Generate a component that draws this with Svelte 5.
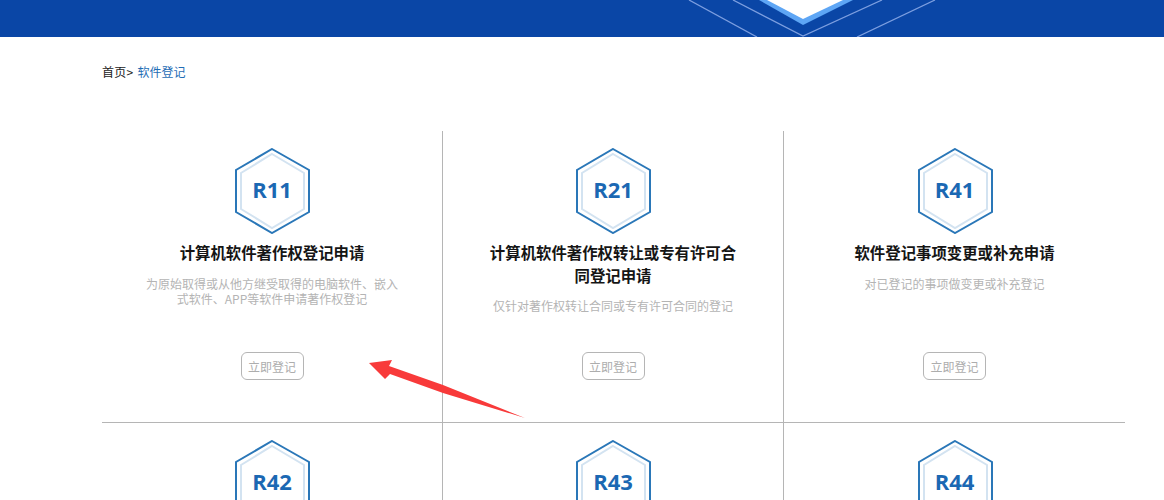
<script>
	const cards = [
		{ code: 'R11', title: '计算机软件著作权登记申请', desc: '为原始取得或从他方继受取得的电脑软件、嵌入式软件、APP等软件申请著作权登记' },
		{ code: 'R21', title: '计算机软件著作权转让或专有许可合同登记申请', desc: '仅针对著作权转让合同或专有许可合同的登记' },
		{ code: 'R41', title: '软件登记事项变更或补充申请', desc: '对已登记的事项做变更或补充登记' },
		{ code: 'R42', title: '', desc: '' },
		{ code: 'R43', title: '', desc: '' },
		{ code: 'R44', title: '', desc: '' }
	];
</script>

<div class="page">
	<header class="banner">
		<svg class="banner-art" width="1164" height="37" viewBox="0 0 1164 37">
			<polygon points="759,0 803,25 853,0" fill="#5ea6f5" />
			<polygon points="767,0 803,19 843,0" fill="#ffffff" />
			<g fill="none" stroke="#7d9fe0" stroke-width="1.3">
				<path d="M733 0 L803 36 L882 0" />
				<path d="M689 0 L757 37" />
				<path d="M935 0 L857 37" />
			</g>
		</svg>
	</header>

	<nav class="crumbs">
		<span>首页&gt;</span>
		<a href="#top">软件登记</a>
	</nav>

	<section class="grid">
		{#each cards as card}
			<article class="card">
				<div class="hex">
					<svg width="76" height="86" viewBox="0 0 76 86">
						<polygon points="38,1 75,22 75,64 38,85 2,64 2,22" fill="none" stroke="#2a77b8" stroke-width="2" />
						<polygon points="38,6 70,25 70,61 38,80 7,61 7,25" fill="none" stroke="#d3e3f1" stroke-width="2" />
					</svg>
					<span>{card.code}</span>
				</div>
				{#if card.title}
					<h3>{card.title}</h3>
					<p>{card.desc}</p>
					<button type="button">立即登记</button>
				{/if}
			</article>
		{/each}
	</section>

	<svg class="arrow" width="170" height="65" viewBox="0 0 170 65">
		<polygon points="4,8 27,5 24,11 78,30 160,63 78,38 25,19 20,24" fill="#f83a3a" />
	</svg>
</div>

<style>
	:global(body) {
		margin: 0;
		background: #fff;
	}

	.page {
		position: relative;
		height: 500px;
		overflow: hidden;
		font-family: "Noto Sans CJK SC", "Open Sans", sans-serif;
	}

	.banner {
		position: relative;
		height: 37px;
		background: #0a46a6;
	}

	.banner-art {
		position: absolute;
		left: 0;
		top: 0;
	}

	.crumbs {
		display: flex;
		gap: 4px;
		margin: 26px 0 0 102px;
		font-size: 12px;
		line-height: 18px;
		color: #222;
	}

	.crumbs span {
		letter-spacing: 0.3px;
	}

	.crumbs a {
		color: #1f6db5;
		text-decoration: none;
	}

	.grid {
		display: grid;
		grid-template-columns: repeat(3, 341px);
		grid-auto-rows: 292px;
		width: 1023px;
		margin: 50px 0 0 102px;
	}

	.card {
		display: flex;
		flex-direction: column;
		align-items: center;
		box-sizing: border-box;
		padding: 17px 41px 42px;
		border-right: 1px solid #b5b5b5;
		border-bottom: 1px solid #b5b5b5;
		text-align: center;
	}

	.card:nth-child(3n) {
		border-right: none;
	}

	.card:nth-child(n + 4) {
		border-bottom: none;
	}

	.hex {
		display: grid;
		place-items: center;
		flex: none;
		width: 76px;
		height: 86px;
	}

	.hex > * {
		grid-area: 1 / 1;
	}

	.hex span {
		padding-bottom: 4px;
		font-family: "Open Sans", sans-serif;
		font-size: 22px;
		font-weight: 700;
		color: #1b68b3;
	}

	h3 {
		margin: 7px 0 0;
		font-size: 15.4px;
		line-height: 22.5px;
		font-weight: 700;
		color: #151515;
	}

	p {
		margin: 12px 0 0;
		font-size: 12px;
		line-height: 15px;
		color: #b4b4b4;
	}

	button {
		margin-top: auto;
		width: 63px;
		height: 28px;
		padding: 0;
		border: 1px solid #b5b5b5;
		border-radius: 6px;
		background: #fff;
		font: inherit;
		font-size: 12px;
		color: #adadad;
	}

	.arrow {
		position: absolute;
		left: 365px;
		top: 355px;
	}
</style>
